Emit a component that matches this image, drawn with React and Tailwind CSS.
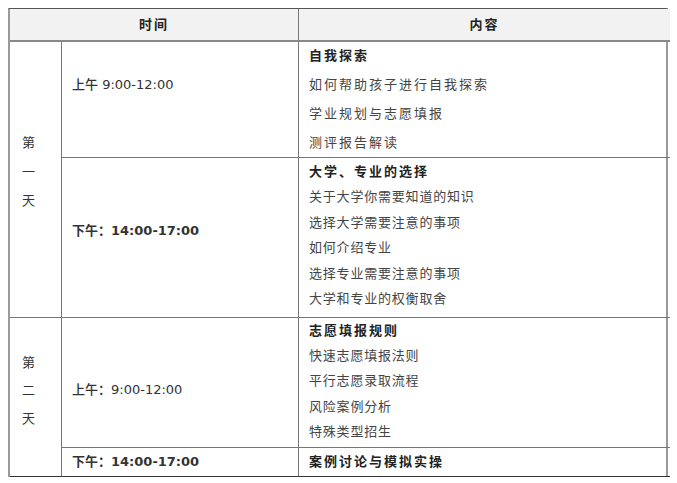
const font = { fontFamily: '"DejaVu Sans", "Noto Sans CJK SC", sans-serif' };

function TimeCell({ label, pt, bold }) {
  return (
    <div className={`pl-[10px] text-[13px] text-[#333] border-r border-b border-[#777] ${pt} ${bold ? 'font-bold' : 'font-medium'}`}>
      {label}
    </div>
  );
}

function ContentCell({ title, items, leading, pt, tight }) {
  return (
    <div className={`pl-[10px] text-[13px] border-b border-[#777] ${leading} ${pt}`}>
      <div className="font-bold text-[#222] tracking-[2px]">{title}</div>
      {items.map((it) => (
        <div key={it} className={`text-[#444] ${tight ? 'tracking-[0.8px]' : 'tracking-[2px]'}`}>
          {it}
        </div>
      ))}
    </div>
  );
}

export default function App() {
  return (
    <div className="w-[677px] h-[483px] bg-white pt-[8px] pl-[8px]" style={font}>
      <div className="grid w-[660px] grid-cols-[52px_237px_371px] grid-rows-[33px_116px_160px_130px_29px] border-t border-t-[#555] border-l-2 border-l-[#999] border-r-2 border-r-[#999]">
        <div className="col-span-2 flex items-center justify-center font-bold text-[13px] text-[#222] tracking-[2px] bg-[#f2f2f2] border-r border-[#777] border-b-2 border-b-[#888]">
          时间
        </div>
        <div className="flex items-center justify-center font-bold text-[13px] text-[#222] tracking-[2px] bg-[#f2f2f2] border-b-2 border-b-[#888]">
          内容
        </div>

        <div className="row-span-2 flex flex-col pt-[86px] pl-[12px] text-[13px] leading-[29px] text-[#333] border-r border-b border-[#777]">
          <span>第</span>
          <span>一</span>
          <span>天</span>
        </div>
        <TimeCell label="上午 9:00-12:00" pt="pt-[33px]" />
        <ContentCell
          title="自我探索"
          items={['如何帮助孩子进行自我探索', '学业规划与志愿填报', '测评报告解读']}
          leading="leading-[29px]"
          pt="-mt-[1px]"
        />

        <TimeCell label="下午：14:00-17:00" pt="pt-[63px]" bold />
        <ContentCell
          title="大学、专业的选择"
          items={[
            '关于大学你需要知道的知识',
            '选择大学需要注意的事项',
            '如何介绍专业',
            '选择专业需要注意的事项',
            '大学和专业的权衡取舍',
          ]}
          leading="leading-[25.4px]"
          pt="pt-[1px]"
          tight
        />

        <div className="row-span-2 flex flex-col pt-[31px] pl-[12px] text-[13px] leading-[28px] text-[#333] border-r border-b border-b-[#333] border-r-[#777]">
          <span>第</span>
          <span>二</span>
          <span>天</span>
        </div>
        <TimeCell label="上午：9:00-12:00" pt="pt-[62px]" />
        <ContentCell
          title="志愿填报规则"
          items={['快速志愿填报法则', '平行志愿录取流程', '风险案例分析', '特殊类型招生']}
          leading="leading-[25.2px]"
          pt="pt-0"
          tight
        />

        <div className="flex items-center pl-[10px] text-[13px] font-bold text-[#333] border-r border-[#777] border-b border-b-[#333]">
          下午：14:00-17:00
        </div>
        <div className="flex items-center pl-[10px] text-[13px] font-bold text-[#222] tracking-[2px] border-b border-[#333]">
          案例讨论与模拟实操
        </div>
      </div>
    </div>
  );
}
